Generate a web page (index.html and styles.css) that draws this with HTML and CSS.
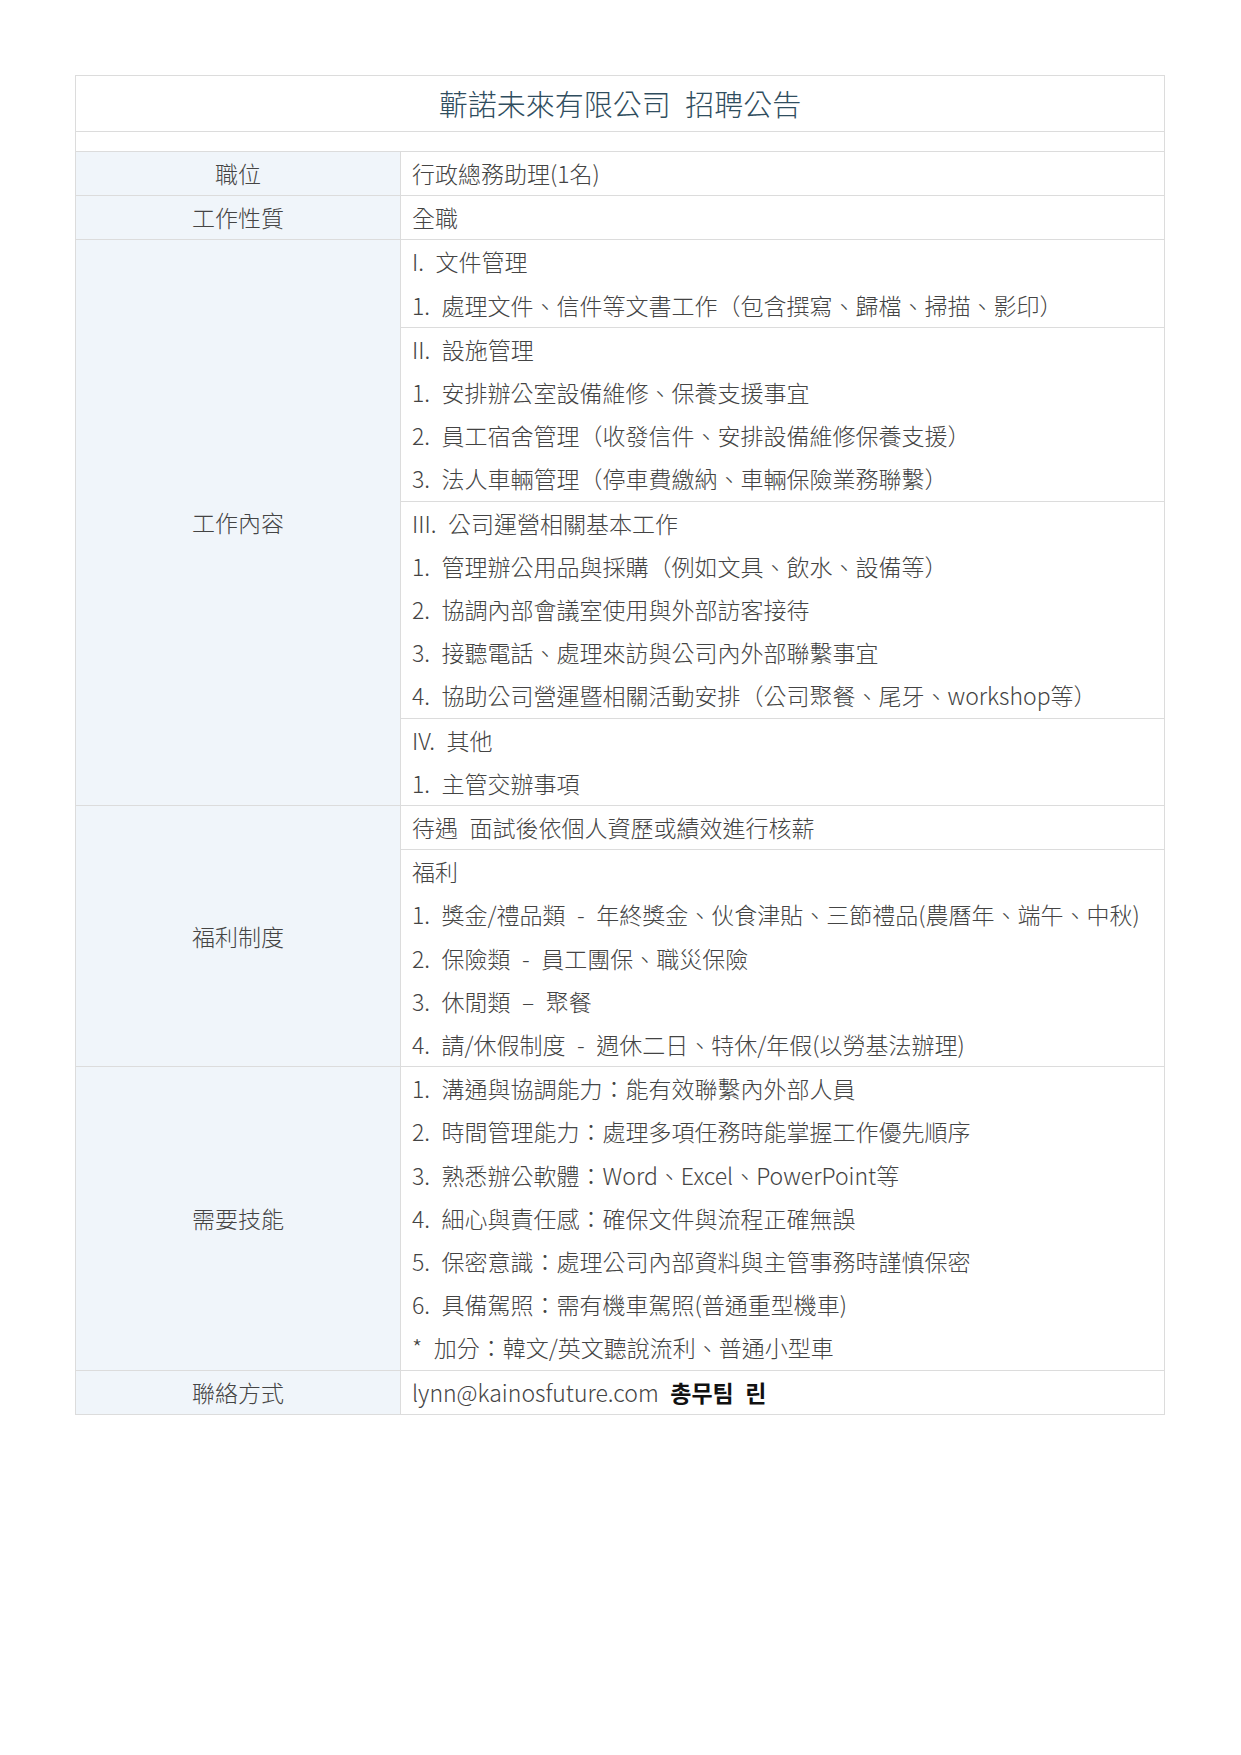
FILE: index.html
```html
<!DOCTYPE html>
<html lang="zh-Hant">
<head>
    <meta charset="UTF-8">
    <title>蘄諾未來有限公司 招聘公告</title>
    <link rel="stylesheet" href="styles.css">
</head>
<body>
    <div class="page">
        <table class="job">
            <colgroup>
                <col class="col-label">
                <col>
            </colgroup>
            <tr>
                <th colspan="2" class="title">蘄諾未來有限公司&ensp;招聘公告</th>
            </tr>
            <tr class="spacer">
                <td colspan="2"></td>
            </tr>
            <tr>
                <th class="label">職位</th>
                <td>行政總務助理(1名)</td>
            </tr>
            <tr>
                <th class="label">工作性質</th>
                <td>全職</td>
            </tr>
            <tr>
                <th class="label" rowspan="4">工作內容</th>
                <td>
                    <div>I.&ensp;文件管理</div>
                    <div>1.&ensp;處理文件、信件等文書工作（包含撰寫、歸檔、掃描、影印）</div>
                </td>
            </tr>
            <tr>
                <td>
                    <div>II.&ensp;設施管理</div>
                    <div>1.&ensp;安排辦公室設備維修、保養支援事宜</div>
                    <div>2.&ensp;員工宿舍管理（收發信件、安排設備維修保養支援）</div>
                    <div>3.&ensp;法人車輛管理（停車費繳納、車輛保險業務聯繫）</div>
                </td>
            </tr>
            <tr>
                <td>
                    <div>III.&ensp;公司運營相關基本工作</div>
                    <div>1.&ensp;管理辦公用品與採購（例如文具、飲水、設備等）</div>
                    <div>2.&ensp;協調內部會議室使用與外部訪客接待</div>
                    <div>3.&ensp;接聽電話、處理來訪與公司內外部聯繫事宜</div>
                    <div>4.&ensp;協助公司營運暨相關活動安排（公司聚餐、尾牙、workshop等）</div>
                </td>
            </tr>
            <tr>
                <td>
                    <div>IV.&ensp;其他</div>
                    <div>1.&ensp;主管交辦事項</div>
                </td>
            </tr>
            <tr>
                <th class="label" rowspan="2">福利制度</th>
                <td>待遇&ensp;面試後依個人資歷或績效進行核薪</td>
            </tr>
            <tr>
                <td>
                    <div>福利</div>
                    <div>1.&ensp;獎金/禮品類&ensp;-&ensp;年終獎金、伙食津貼、三節禮品(農曆年、端午、中秋)</div>
                    <div>2.&ensp;保險類&ensp;-&ensp;員工團保、職災保險</div>
                    <div>3.&ensp;休閒類&ensp;–&ensp;聚餐</div>
                    <div>4.&ensp;請/休假制度&ensp;-&ensp;週休二日、特休/年假(以勞基法辦理)</div>
                </td>
            </tr>
            <tr>
                <th class="label">需要技能</th>
                <td>
                    <div>1.&ensp;溝通與協調能力：能有效聯繫內外部人員</div>
                    <div>2.&ensp;時間管理能力：處理多項任務時能掌握工作優先順序</div>
                    <div>3.&ensp;熟悉辦公軟體：Word、Excel、PowerPoint等</div>
                    <div>4.&ensp;細心與責任感：確保文件與流程正確無誤</div>
                    <div>5.&ensp;保密意識：處理公司內部資料與主管事務時謹慎保密</div>
                    <div>6.&ensp;具備駕照：需有機車駕照(普通重型機車)</div>
                    <div>*&ensp;加分：韓文/英文聽說流利、普通小型車</div>
                </td>
            </tr>
            <tr>
                <th class="label">聯絡方式</th>
                <td>lynn@kainosfuture.com&ensp;<b class="contact">총무팀&ensp;린</b></td>
            </tr>
        </table>
    </div>
</body>
</html>
```

FILE: styles.css
```css
body {
    margin: 0;
    background: #fff;
    font-family: "Noto Sans CJK TC", "Noto Sans", sans-serif;
    font-weight: 300;
    color: #444;
}

.page {
    padding: 75px 76px 0 75px;
}

.job {
    width: 100%;
    border-collapse: collapse;
    table-layout: fixed;
    font-size: 23px;
}

.col-label {
    width: 325px;
}

.job th,
.job td {
    border: 1px solid #dcdcdc;
    padding: 0 11px;
    line-height: 43.2px;
    text-align: left;
    vertical-align: top;
    font-weight: 300;
    white-space: nowrap;
}

.job .title {
    height: 55px;
    padding: 0;
    text-align: center;
    vertical-align: middle;
    font-size: 29px;
    line-height: 55px;
    color: #2f4d5e;
    background: #fff;
}

.spacer td {
    height: 19px;
    padding: 0;
    line-height: 0;
}

.job .label {
    background: #f0f5fa;
    text-align: center;
    vertical-align: middle;
    color: #444;
}

.contact {
    font-family: "Noto Sans CJK KR", sans-serif;
    font-weight: 700;
    color: #111;
}
```
